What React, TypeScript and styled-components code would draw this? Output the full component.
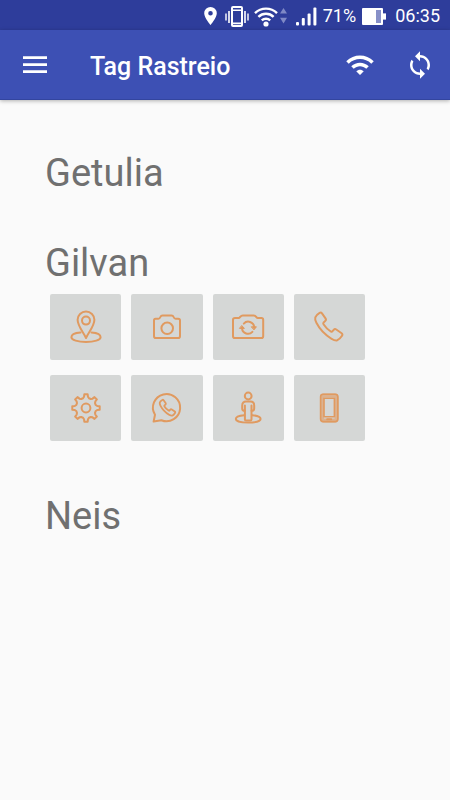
import React from "react";
import styled, { createGlobalStyle } from "styled-components";

const GlobalStyle = createGlobalStyle`
  * { box-sizing: border-box; }
  body {
    margin: 0;
    background: #fafafa;
    font-family: Roboto, "Liberation Sans", sans-serif;
  }
`;

const StatusBar = styled.div`
  display: flex;
  align-items: center;
  justify-content: flex-end;
  height: 30px;
  padding: 2px 10px 0 0;
  background: #2e3d9b;
  color: #fff;
  font-size: 18px;
  line-height: 28px;
`;

const StatusIcon = styled.svg<{ $gap: number }>`
  flex: none;
  display: block;
  margin-right: ${(p) => p.$gap}px;
`;

const Battery = styled.span`
  margin-right: 6px;
`;

const Toolbar = styled.header`
  display: flex;
  align-items: center;
  height: 70px;
  padding: 0 15px 0 20px;
  background: #3d50b4;
  border-bottom: 1px solid #33459f;
  box-shadow: 0 1px 4px rgba(0, 0, 0, 0.3);
  color: #fff;
`;

const Title = styled.h1`
  flex: 1;
  margin: 0 0 0 40px;
  padding-top: 4px;
  font-size: 25px;
  line-height: 30px;
  font-weight: 500;
`;

const IconButton = styled.button`
  display: block;
  width: 30px;
  height: 30px;
  padding: 0;
  border: 0;
  background: none;
  color: inherit;
  cursor: pointer;

  & + & {
    margin-left: 30px;
  }

  svg {
    display: block;
  }
`;

const People = styled.main`
  padding: 51px 45px 0;
`;

const Person = styled.section`
  margin-bottom: 46px;
`;

const Name = styled.h2`
  margin: 0;
  color: #707070;
  font-size: 38px;
  line-height: 44px;
  font-weight: 400;
`;

const Actions = styled.div`
  display: grid;
  grid-template-columns: repeat(4, 1fr);
  gap: 15px 10px;
  padding: 9px 40px 7px 5px;
`;

const ActionButton = styled.button`
  display: flex;
  align-items: center;
  justify-content: center;
  height: 66px;
  padding: 0;
  border: 0;
  border-radius: 2px;
  background: #d5d7d6;
  color: #e09a60;
  cursor: pointer;
`;

const ActionIcon = styled.svg`
  display: block;
  fill: none;
  stroke: currentColor;
  stroke-width: 2;
  stroke-linecap: round;
  stroke-linejoin: round;
`;

const gearPath = (() => {
  const points: string[] = [];
  const profile: [number, number][] = [
    [-17, 10.2],
    [-10, 11.4],
    [-7, 13.8],
    [7, 13.8],
    [10, 11.4],
    [17, 10.2],
  ];
  for (let tooth = 0; tooth < 8; tooth++) {
    for (const [offset, radius] of profile) {
      const angle = ((tooth * 45 + offset) * Math.PI) / 180;
      points.push(
        `${(20 + radius * Math.sin(angle)).toFixed(2)} ${(20 - radius * Math.cos(angle)).toFixed(2)}`
      );
    }
  }
  return `M${points.join("L")}Z`;
})();

const handset =
  "M10.6 5.9C11.5 5.3 12.4 5.6 13 6.4L16.5 11.4C17.2 12.4 17 13.4 16.2 14.1L14.6 15.5C14.1 16 14.1 16.6 14.5 17.2C16.3 20 18.9 22.6 21.8 24.5C22.4 24.9 23.1 24.8 23.5 24.2L24.7 22.8C25.4 22 26.4 21.9 27.3 22.5L32.6 26.2C33.5 26.9 33.7 27.9 33 28.8C31.7 30.8 30.2 32.6 28.2 33.3C26.6 33.8 24.8 33.1 22.6 31.8C16.6 28.2 10.7 22.2 7.4 15.8C6.4 13.8 5.8 12 6.3 10.4C6.9 8.5 8.6 7.1 10.6 5.9Z";

const actions: { label: string; drawing: React.ReactNode }[] = [
  {
    label: "Localização",
    drawing: (
      <>
        <path d="M20 31C17.5 25.5 11.6 19 11.6 12.8A8.4 8.2 0 0 1 28.4 12.8C28.4 19 22.5 25.5 20 31Z" />
        <circle cx="20" cy="13.6" r="4" />
        <path d="M14.5 25.6C9 26 5.4 27.8 5.4 30.2C5.4 33 12 35 20 35S34.6 33 34.6 30.2C34.6 27.8 31 26 25.5 25.6" />
      </>
    ),
  },
  {
    label: "Câmera",
    drawing: (
      <>
        <path d="M8.5 11.8H11.4C12.6 11.8 13 11 13.4 10C13.8 9 14.5 8.6 15.5 8.6H24.5C25.5 8.6 26.2 9 26.6 10C27 11 27.4 11.8 28.6 11.8H31.2Q33 11.8 33 13.6V29.2Q33 31 31.2 31H8.8Q7 31 7 29.2V13.6Q7 11.8 8.5 11.8Z" />
        <circle cx="20.2" cy="21.3" r="5.8" />
      </>
    ),
  },
  {
    label: "Alternar câmera",
    drawing: (
      <>
        <path d="M7 10.9H10.8C12 10.9 12.4 8.6 14.8 8.6H25.6C28 8.6 28.4 10.9 29.6 10.9H33.4Q35.2 10.9 35.2 12.7V29.2Q35.2 31 33.4 31H6.8Q5 31 5 29.2V12.7Q5 10.9 7 10.9Z" />
        <path d="M15.8 16.6A6 6 0 0 1 26.2 20M24.4 24.8A6 6 0 0 1 14 21.4" />
        <path d="M23.6 19.8H28.4L26.2 22.6ZM11.8 21.4H16.4L14 18.8Z" fill="currentColor" strokeWidth="1" />
      </>
    ),
  },
  { label: "Ligar", drawing: <path d={handset} /> },
  {
    label: "Configurações",
    drawing: (
      <>
        <path d={gearPath} />
        <circle cx="20" cy="20" r="4.4" />
      </>
    ),
  },
  {
    label: "WhatsApp",
    drawing: (
      <>
        <path d="M6.6 33.6L8 26.8A13.6 13.6 0 1 1 14.4 32.2Z" />
        <path
          d={handset}
          transform="translate(9.2 8.6) scale(0.57)"
          strokeWidth="3.2"
        />
      </>
    ),
  },
  {
    label: "Ver na rua",
    drawing: (
      <>
        <circle cx="20.2" cy="8" r="3.4" />
        <path d="M16.8 22.8C14.6 22.8 14.2 22 14.2 20.4V17.4C14.2 14.8 15.8 13.4 18 13.4H22.4C24.6 13.4 26.2 14.8 26.2 17.4V20.4C26.2 22 25.8 22.8 23.6 22.8" />
        <path d="M16.9 17.4V31.6Q16.9 32.6 18 32.6H22.4Q23.5 32.6 23.5 31.6V17.4" />
        <path d="M16.2 27.2C11 27.6 7.8 29 7.8 31C7.8 33.2 13 34.6 20.2 34.6S32.6 33.2 32.6 31C32.6 29 29.4 27.6 24.2 27.2" />
      </>
    ),
  },
  {
    label: "Dispositivo",
    drawing: (
      <>
        <rect x="13" y="7.6" width="14.6" height="24.8" rx="1.6" strokeWidth="4" strokeOpacity="0.6" />
        <rect x="11.6" y="6.2" width="17.2" height="27.4" rx="2.6" strokeWidth="1.6" />
        <rect x="15" y="10.2" width="10.4" height="18.6" strokeWidth="1.6" />
        <path d="M18.2 31.2H22.2" />
      </>
    ),
  },
];

const people = [
  { name: "Getulia", open: false },
  { name: "Gilvan", open: true },
  { name: "Neis", open: false },
];

export default function App() {
  return (
    <>
      <GlobalStyle />
      <StatusBar>
        <StatusIcon $gap={8} width="13" height="18" viewBox="0 0 13 18" fill="#fff">
          <path
            fillRule="evenodd"
            d="M6.5 0A6.3 6.3 0 0 0 .2 6.3C.2 11 6.5 18 6.5 18S12.8 11 12.8 6.3A6.3 6.3 0 0 0 6.5 0ZM6.5 4A2.3 2.3 0 1 1 6.5 8.6A2.3 2.3 0 0 1 6.5 4Z"
          />
        </StatusIcon>
        <StatusIcon $gap={5} width="24" height="21" viewBox="0 0 24 21" fill="none" stroke="#fff">
          <rect x="7" y="1" width="10" height="19" rx="1" strokeWidth="2" />
          <path d="M7 4.2H17M7 17.4H17" strokeWidth="1.6" />
          <path d="M4 5V17M20 5V17" strokeWidth="1.6" />
          <path d="M1 7.5V14.5M23 7.5V14.5" strokeWidth="1.4" />
        </StatusIcon>
        <StatusIcon $gap={2} width="24" height="21" viewBox="0 0 24 21" fill="none" stroke="#fff" strokeWidth="2.4">
          <path d="M1 7.2A15.6 15.6 0 0 1 23 7.2" />
          <path d="M4.4 10.9A10.8 10.8 0 0 1 19.6 10.9" />
          <path d="M7.8 14.4A6 6 0 0 1 16.2 14.4" />
          <circle cx="12" cy="18" r="2.6" fill="#fff" stroke="none" />
        </StatusIcon>
        <StatusIcon $gap={9} width="7" height="16" viewBox="0 0 7 16" fill="#7f89c6">
          <path d="M3.5 0L7 5.6H0ZM3.5 15.4L0 9.8H7Z" />
        </StatusIcon>
        <StatusIcon $gap={6} width="21" height="19" viewBox="0 0 21 19" fill="#fff">
          <rect x="0" y="15" width="3" height="3.6" rx="1" />
          <rect x="5.8" y="11" width="3" height="7.6" rx="1" />
          <rect x="11.6" y="6.4" width="3" height="12.2" rx="1" />
          <rect x="17.4" y="0.6" width="3" height="18" rx="1" />
        </StatusIcon>
        <Battery>71%</Battery>
        <StatusIcon $gap={9} width="24" height="17" viewBox="0 0 24 17" fill="#fff">
          <rect width="21" height="17" rx="1" />
          <rect x="14" y="2" width="5" height="13" fill="#8790c8" />
          <rect x="21" y="5.4" width="3" height="6.2" />
        </StatusIcon>
        <time>06:35</time>
      </StatusBar>

      <Toolbar>
        <IconButton aria-label="Menu">
          <svg width="30" height="30" viewBox="0 0 30 30" fill="currentColor">
            <path d="M3 6.2H27V9H3ZM3 13.2H27V16H3ZM3 20.2H27V23H3Z" />
          </svg>
        </IconButton>
        <Title>Tag Rastreio</Title>
        <IconButton aria-label="Conexão">
          <svg width="30" height="30" viewBox="0 0 24 24" fill="currentColor">
            <path d="M1 9l2 2c4.97-4.97 13.03-4.97 18 0l2-2C16.93 2.93 7.08 2.93 1 9zm8 8l3 3 3-3c-1.65-1.66-4.34-1.66-6 0zm-4-4l2 2c2.76-2.76 7.24-2.76 10 0l2-2C15.14 9.14 8.87 9.14 5 13z" />
          </svg>
        </IconButton>
        <IconButton aria-label="Sincronizar">
          <svg width="30" height="30" viewBox="0 0 24 24" fill="currentColor">
            <path d="M12 4V1L8 5l4 4V6c3.31 0 6 2.69 6 6 0 1.01-.25 1.97-.7 2.8l1.46 1.46C19.54 15.03 20 13.57 20 12c0-4.42-3.58-8-8-8zm0 14c-3.31 0-6-2.69-6-6 0-1.01.25-1.97.7-2.8L5.24 7.74C4.46 8.97 4 10.43 4 12c0 4.42 3.58 8 8 8v3l4-4-4-4v3z" />
          </svg>
        </IconButton>
      </Toolbar>

      <People>
        {people.map((person) => (
          <Person key={person.name}>
            <Name>{person.name}</Name>
            {person.open && (
              <Actions>
                {actions.map((action) => (
                  <ActionButton key={action.label} aria-label={action.label}>
                    <ActionIcon width="40" height="40" viewBox="0 0 40 40">
                      {action.drawing}
                    </ActionIcon>
                  </ActionButton>
                ))}
              </Actions>
            )}
          </Person>
        ))}
      </People>
    </>
  );
}
